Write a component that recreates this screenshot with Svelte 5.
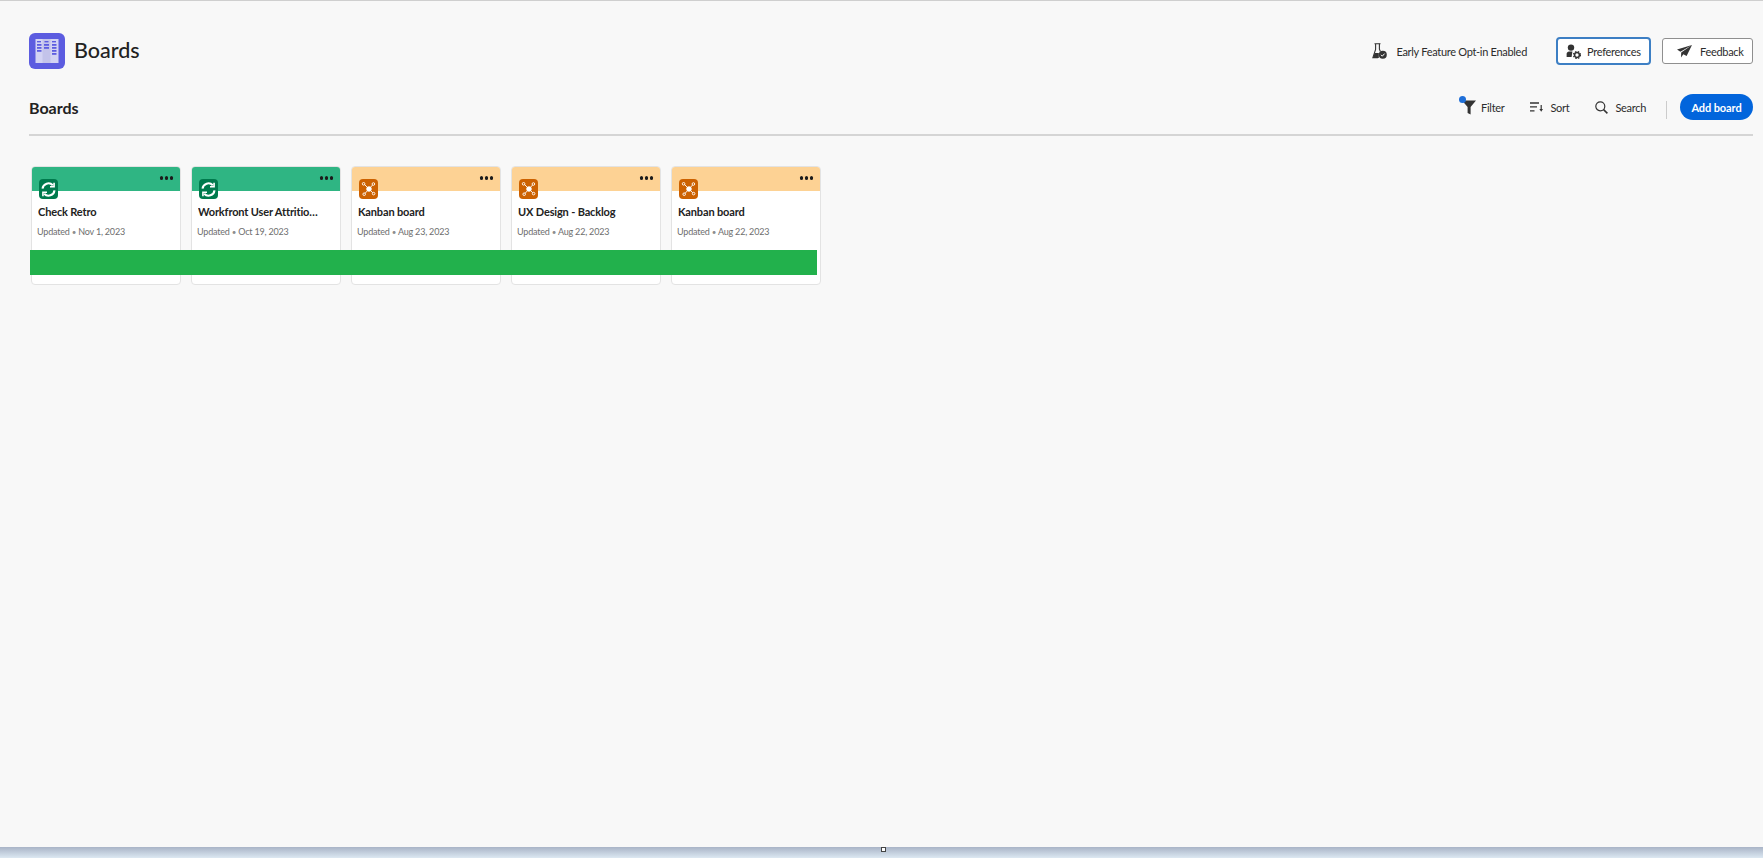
<script lang="ts">
	interface Board {
		name: string;
		updated: string;
		kind: 'retro' | 'kanban';
	}

	const boards: Board[] = [
		{ name: 'Check Retro', updated: 'Nov 1, 2023', kind: 'retro' },
		{ name: 'Workfront User Attrition Analysis', updated: 'Oct 19, 2023', kind: 'retro' },
		{ name: 'Kanban board', updated: 'Aug 23, 2023', kind: 'kanban' },
		{ name: 'UX Design - Backlog', updated: 'Aug 22, 2023', kind: 'kanban' },
		{ name: 'Kanban board', updated: 'Aug 22, 2023', kind: 'kanban' }
	];
</script>

<div class="page">
	<main>
		<header class="top">
			<div class="brand">
				<svg class="logo" width="36" height="36" viewBox="0 0 36 36">
					<rect width="36" height="36" rx="6" fill="#5c5ce0" />
					<rect x="6.5" y="6" width="23" height="24" fill="#d3d3f3" />
					<rect x="13.5" y="6" width="8" height="24" fill="#c3c3ea" />
					<g fill="#5c5ce0">
						<rect x="8" y="8" width="4" height="1.4" />
						<rect x="15.5" y="8" width="4" height="1.4" />
						<rect x="23" y="8" width="4" height="1.4" />
						<rect x="8" y="11" width="4.5" height="1.8" />
						<rect x="15" y="11" width="5" height="1.8" />
						<rect x="23" y="11" width="4.5" height="1.8" />
						<rect x="8" y="14" width="4.5" height="1.8" />
						<rect x="15" y="14" width="5" height="1.8" />
						<rect x="23" y="14" width="4.5" height="1.8" />
						<rect x="8" y="17" width="4.5" height="1.8" />
						<rect x="23" y="17" width="4.5" height="1.8" />
						<rect x="23" y="20" width="4.5" height="1.8" />
					</g>
				</svg>
				<h1>Boards</h1>
			</div>
			<div class="top-actions">
				<span class="opt-in">
					<svg width="15" height="16" viewBox="0 0 15 16">
						<path d="M2.5.7h6M3.6.7v5.6L.9 14.6h5" fill="none" stroke="#333" stroke-width="1.1" />
						<path d="M7.4.7v5.4l1 2.4" fill="none" stroke="#333" stroke-width="1.1" />
						<path d="M2.6 10h4.2v5H.8z" fill="#333" />
						<circle cx="10.8" cy="11.8" r="4" fill="#333" />
						<path d="M9 11.8l1.3 1.4 2.3-2.6" fill="none" stroke="#fff" stroke-width="1" />
					</svg>
					Early Feature Opt-in Enabled
				</span>
				<button class="outline active">
					<svg width="15" height="15" viewBox="0 0 15 15">
						<circle cx="5" cy="3.6" r="3.2" fill="#333" />
						<path d="M.6 13V10c0-1.5 1.2-2.3 2.4-2.6l3.4.1-.8 5.5z" fill="#333" />
						<circle cx="11" cy="11" r="2.4" fill="none" stroke="#333" stroke-width="1.5" />
						<circle cx="11" cy="11" r="3.6" fill="none" stroke="#333" stroke-width="1.1" stroke-dasharray="1.4 1.5" />
					</svg>
					Preferences
				</button>
				<button class="outline feedback">
					<svg width="15" height="13" viewBox="0 0 15 13">
						<path d="M15 0L0 4.6l3.4 2.2zM15 0L4.2 7.4l-.2 5 2.4-3.2 3.2 1.8z" fill="#333" />
					</svg>
					Feedback
				</button>
			</div>
		</header>

		<div class="toolbar">
			<h2>Boards</h2>
			<div class="tools">
				<button class="tool filter">
					<span class="dot"></span>
					<svg width="14" height="16" viewBox="0 0 14 16">
						<path d="M0 1.5h14L8.6 8v7.6L5.6 14V8z" fill="#333" />
					</svg>
					Filter
				</button>
				<button class="tool sort">
					<svg width="13" height="10" viewBox="0 0 13 10">
						<path d="M0 1h9M0 4.8h7M0 8.8h4.5" stroke="#333" stroke-width="1.3" fill="none" />
						<path d="M11.2 3v5" stroke="#333" stroke-width="1.2" />
						<path d="M9.4 7h3.6l-1.8 2.8z" fill="#333" />
					</svg>
					Sort
				</button>
				<button class="tool search">
					<svg width="13" height="13" viewBox="0 0 13 13">
						<circle cx="5.3" cy="5.3" r="4.5" fill="none" stroke="#333" stroke-width="1.2" />
						<path d="M8.6 8.6l3.8 3.8" stroke="#333" stroke-width="1.5" />
					</svg>
					Search
				</button>
				<span class="sep"></span>
				<button class="add">Add board</button>
			</div>
		</div>

		<section class="grid">
			{#each boards as board}
				<article class="card {board.kind}">
					<div class="band">
						<span class="more"><i></i><i></i><i></i></span>
					</div>
					<div class="body">
						<span class="badge">
							{#if board.kind === 'retro'}
								<svg width="15" height="15" viewBox="0 0 14 14" fill="none" stroke="#fff" stroke-width="1.9">
									<path d="M1.4 6.2A5.6 5.6 0 0 1 11 3" />
									<path d="M12.6 7.8A5.6 5.6 0 0 1 3 11" />
									<path d="M12.2.6v3.8H8.4M1.8 13.4V9.6h3.8" stroke-width="1.5" />
								</svg>
							{:else}
								<svg width="16" height="16" viewBox="0 0 16 16" fill="none" stroke="#fff" stroke-width="0.9">
									<path d="M8 8L3.4 3.4M8 8l3.6-4M8 8l-4 4.4M8 8l3.8 3.8" />
									<circle cx="8" cy="8" r="2.3" fill="#fff" />
									<circle cx="2.6" cy="2.8" r="1.3" />
									<circle cx="12.4" cy="3" r="1.3" />
									<circle cx="3.2" cy="13.2" r="1.3" />
									<circle cx="12.6" cy="12.6" r="1.3" />
								</svg>
							{/if}
						</span>
						<h3>{board.name}</h3>
						<p>Updated <span class="bullet">•</span> {board.updated}</p>
					</div>
				</article>
			{/each}
			<div class="green-bar"></div>
		</section>
	</main>

	<footer class="strip"><span class="handle"></span></footer>
</div>

<style>
	:global(body) {
		margin: 0;
		background: #f8f8f8;
	}

	.page {
		height: 858px;
		display: flex;
		flex-direction: column;
		font-family: Lato, 'Open Sans', sans-serif;
		color: #2c2c2c;
		border-top: 1px solid #cfcfcf;
		box-sizing: border-box;
		overflow: hidden;
	}

	main {
		flex: 1;
		padding: 32px 10px 0 29px;
	}

	.top {
		display: flex;
		justify-content: space-between;
		align-items: center;
		height: 36px;
	}

	.brand {
		display: flex;
		align-items: center;
		gap: 9px;
	}

	h1 {
		margin: -2px 0 0;
		font-size: 21.5px;
		font-weight: 500;
		color: #222;
	}

	.top-actions {
		display: flex;
		align-items: center;
	}

	.opt-in {
		display: flex;
		align-items: center;
		gap: 9px;
		font-size: 11px;
		letter-spacing: -0.3px;
		margin-right: 29px;
	}

	button {
		font-family: inherit;
		color: #2c2c2c;
		background: none;
		border: 0;
		padding: 0;
		cursor: pointer;
		display: flex;
		align-items: center;
	}

	.outline {
		height: 26px;
		border: 1px solid #8f8f8f;
		border-radius: 3px;
		box-sizing: border-box;
		background: #fff;
		font-size: 11px;
		letter-spacing: -0.3px;
	}

	.active {
		width: 95px;
		height: 28px;
		padding-left: 8px;
		gap: 6px;
		border: 2px solid #3d7fc4;
		border-radius: 4px;
		margin-right: 11px;
	}

	.feedback {
		width: 91px;
		padding-left: 14px;
		gap: 8px;
	}

	.toolbar {
		display: flex;
		justify-content: space-between;
		align-items: center;
		margin-top: 24px;
		height: 28px;
		padding-bottom: 13px;
		border-bottom: 2px solid #d5d5d5;
	}

	h2 {
		margin: 0;
		font-size: 16px;
		font-weight: 700;
		color: #222;
	}

	.tools {
		display: flex;
		align-items: center;
	}

	.tool {
		position: relative;
		font-size: 11px;
		letter-spacing: -0.3px;
		gap: 7px;
	}

	.filter {
		gap: 5px;
		margin-right: 26px;
	}

	.sort {
		margin-right: 26px;
	}

	.dot {
		position: absolute;
		left: -3px;
		top: -3px;
		width: 7px;
		height: 7px;
		border-radius: 50%;
		background: #1f6fd8;
	}

	.sep {
		width: 1px;
		height: 18px;
		margin: 5px 13px 0 20px;
		background: #cccccc;
	}

	.add {
		width: 73px;
		height: 26px;
		justify-content: center;
		border-radius: 13px;
		background: #0265dc;
		color: #fff;
		font-size: 11px;
		letter-spacing: -0.1px;
		font-weight: 700;
	}

	.grid {
		position: relative;
		display: flex;
		gap: 10px;
		margin-top: 30px;
		padding-left: 2px;
	}

	.card {
		width: 150px;
		height: 119px;
		box-sizing: border-box;
		background: #fff;
		border: 1px solid #e3e3e3;
		border-radius: 4px;
		overflow: hidden;
	}

	.band {
		height: 24px;
		display: flex;
		justify-content: flex-end;
		padding: 9px 7px 0 0;
		box-sizing: border-box;
	}

	.retro .band {
		background: #2fb583;
	}

	.kanban .band {
		background: #fdd294;
	}

	.more {
		display: flex;
		gap: 1.5px;
		height: 4px;
	}

	.more i {
		width: 3.5px;
		height: 3.5px;
		border-radius: 50%;
		background: #1b1b1b;
	}

	.body {
		padding: 0 6px;
	}

	.badge {
		display: flex;
		align-items: center;
		justify-content: center;
		width: 19px;
		height: 20px;
		margin: -12px 0 0 1px;
		position: relative;
		border-radius: 4px;
	}

	.retro .badge {
		background: #007a4d;
	}

	.kanban .badge {
		background: #cc6100;
	}

	h3 {
		margin: 5px 15px 0 0;
		font-size: 11px;
		letter-spacing: -0.15px;
		line-height: 16px;
		font-weight: 700;
		color: #222;
		white-space: nowrap;
		overflow: hidden;
		text-overflow: ellipsis;
	}

	p {
		margin: 5px 0 0 -1px;
		font-size: 9px;
		letter-spacing: -0.2px;
		line-height: 14px;
		color: #6e6e6e;
	}

	.bullet {
		font-size: 8px;
		color: #8e8e8e;
	}

	.green-bar {
		position: absolute;
		left: 1px;
		top: 84px;
		width: 787px;
		height: 25px;
		background: #22b14c;
	}

	.strip {
		position: relative;
		height: 11px;
		flex: none;
		background: linear-gradient(#a9b4c7, #dce8f2);
	}

	.handle {
		position: absolute;
		left: 881px;
		top: 0;
		width: 5px;
		height: 5px;
		box-sizing: border-box;
		background: #fff;
		border: 1px solid #444;
	}
</style>
